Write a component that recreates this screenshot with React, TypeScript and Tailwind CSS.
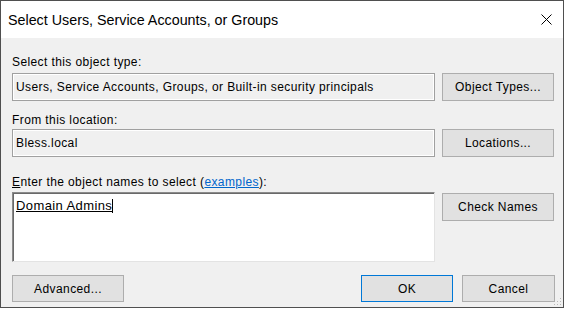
import React from 'react';

const ui = "font-['Liberation_Sans',Arial,sans-serif] text-[12px] leading-[14px] tracking-[0.4px] text-black";

function ReadOnlyBox({ value }: { value: string }) {
  return (
    <div className="h-[28px] flex items-center border border-[#a0a0a0] bg-[#f0f0f0] shadow-[inset_0_0_0_1px_#ffffff] pl-[3px]">
      <span>{value}</span>
    </div>
  );
}

function DlgButton({ label, primary, className = '' }: { label: string; primary?: boolean; className?: string }) {
  return (
    <button
      className={`flex items-center justify-center bg-[#e1e1e1] border ${
        primary ? 'border-[#0078d7]' : 'border-[#adadad]'
      } ${className}`}
    >
      {label}
    </button>
  );
}

export default function App() {
  return (
    <div className="w-[565px] h-[309px] bg-white">
      <div className={`relative w-[564px] h-[308px] border border-[#4f4f4f] bg-[#f0f0f0] flex flex-col ${ui}`}>
        {/* Title bar */}
        <div className="h-[37px] bg-white flex items-center justify-between">
          <span className="pl-[7px] text-[14.3px] leading-[16px] tracking-normal">
            Select Users, Service Accounts, or Groups
          </span>
          <svg width="11" height="11" viewBox="0 0 11 11" className="mr-[11px]">
            <path d="M0.5 0.5 L10.5 10.5 M10.5 0.5 L0.5 10.5" stroke="#000" strokeWidth="1" />
          </svg>
        </div>

        {/* Body */}
        <div className="flex-1 flex flex-col pl-[11px] pr-[8px] pt-[17px]">
          <div className="mb-[4px]">Select this object type:</div>
          <div className="grid grid-cols-[423px_112px] gap-x-[7px]">
            <ReadOnlyBox value="Users, Service Accounts, Groups, or Built-in security principals" />
            <DlgButton label="Object Types..." className="h-[28px]" />
          </div>

          <div className="mt-[12px] mb-[2px]">From this location:</div>
          <div className="grid grid-cols-[423px_112px] gap-x-[7px]">
            <ReadOnlyBox value="Bless.local" />
            <DlgButton label="Locations..." className="h-[28px]" />
          </div>

          <div className="mt-[18px] mb-[3px]">
            <span className="underline">E</span>nter the object names to select (
            <span className="text-[#0066cc] underline">examples</span>):
          </div>
          <div className="grid grid-cols-[423px_112px] gap-x-[7px] items-start">
            <div className="h-[70px] bg-white border border-t-[#8a8a8a] border-l-[#8a8a8a] border-r-[#e3e3e3] border-b-[#e3e3e3] shadow-[inset_1px_1px_0_#696969] pl-[3px] pt-[5px] text-[13px] leading-[15px]">
              <span className="underline">Domain Admins</span>
              <span className="inline-block w-px h-[14px] bg-black align-[-3px]" />
            </div>
            <DlgButton label="Check Names" className="h-[28px] mt-[1px]" />
          </div>

          <div className="mt-[13px] flex items-center">
            <DlgButton label="Advanced..." className="w-[112px] h-[27px]" />
            <div className="flex-1" />
            <DlgButton label="OK" primary className="w-[92px] h-[27px]" />
            <DlgButton label="Cancel" className="w-[93px] h-[27px] ml-[9px]" />
          </div>
        </div>

        {/* Resize grip */}
        <svg width="8" height="8" viewBox="0 0 8 8" className="absolute right-[1px] bottom-[1px]">
          <rect x="6" y="0" width="1" height="1" fill="#b8b8b8" />
          <rect x="3" y="3" width="1" height="1" fill="#b8b8b8" />
          <rect x="6" y="3" width="1" height="1" fill="#b8b8b8" />
          <rect x="0" y="6" width="1" height="1" fill="#b8b8b8" />
          <rect x="3" y="6" width="1" height="1" fill="#b8b8b8" />
          <rect x="6" y="6" width="1" height="1" fill="#b8b8b8" />
        </svg>
      </div>
    </div>
  );
}
